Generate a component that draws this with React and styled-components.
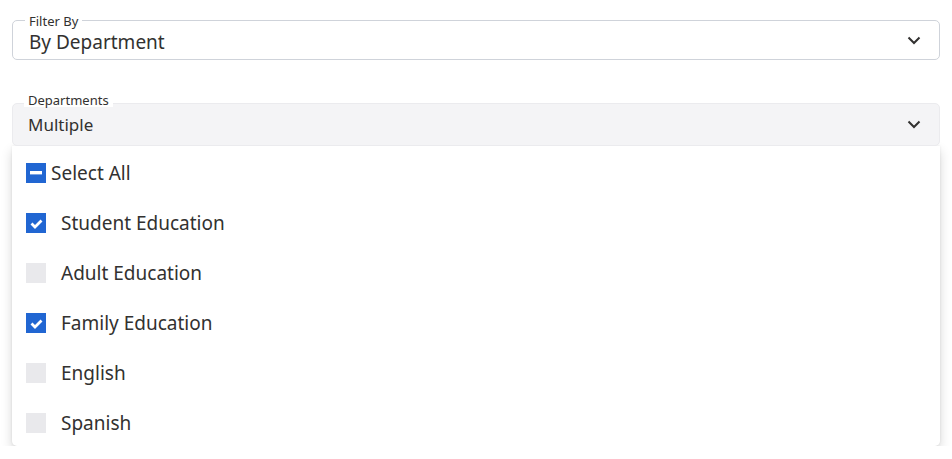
import React, { useState } from "react";
import styled, { createGlobalStyle } from "styled-components";

const GlobalStyle = createGlobalStyle`
  body {
    margin: 0;
    background: #fff;
    font-family: "Noto Sans", "Open Sans", sans-serif;
    color: #323130;
  }
`;

const Page = styled.div`
  display: flex;
  flex-direction: column;
  gap: 43px;
  padding: 20px 12px 0 12px;
  width: 928px;
`;

const Field = styled.div`
  position: relative;
  box-sizing: border-box;
  height: ${(p) => (p.filled ? "43px" : "40px")};
  padding: 0 18px 0 ${(p) => (p.filled ? "15px" : "16px")};
  border: 1px solid ${(p) => (p.filled ? "#ebebee" : "#cfd3da")};
  border-radius: 5px;
  background: ${(p) => (p.filled ? "#f4f4f6" : "#fff")};
  display: flex;
  align-items: center;
  justify-content: space-between;
`;

const Label = styled.span`
  position: absolute;
  top: ${(p) => (p.filled ? "-10px" : "-6px")};
  left: ${(p) => (p.filled ? "11px" : "12px")};
  padding: 0 4px;
  font-size: 13px;
  line-height: ${(p) => (p.filled ? "13px" : "12px")};
  background: #fff;
  color: #323130;
`;

const Value = styled.span`
  font-size: ${(p) => (p.small ? "17px" : "19px")};
  line-height: 22px;
  margin-top: ${(p) => (p.small ? "1px" : "3px")};
`;

const Chevron = styled.svg`
  width: 14px;
  height: 9px;
  flex: none;
`;

const Group = styled.div`
  display: flex;
  flex-direction: column;
`;

const Panel = styled.div`
  background: #fff;
  border-radius: 0 0 5px 5px;
  box-shadow: 0 5px 12px rgba(0, 0, 0, 0.16), 0 0 3px rgba(0, 0, 0, 0.08);
  padding: 2px 0 0 14px;
  display: flex;
  flex-direction: column;
`;

const Row = styled.label`
  display: flex;
  align-items: center;
  height: 50px;
  gap: ${(p) => (p.tight ? "5px" : "15px")};
  font-size: 19px;
  color: #323130;
  cursor: pointer;
  &:last-child {
    margin-bottom: -2px;
  }
`;

const Box = styled.span`
  width: 20px;
  height: 20px;
  flex: none;
  display: flex;
  align-items: center;
  justify-content: center;
  background: ${(p) => (p.on ? "#2166d2" : "#e9e9ec")};
`;

const ChevronIcon = () => (
  <Chevron viewBox="0 0 14 9">
    <path d="M1.5 1.5 L7 7 L12.5 1.5" fill="none" stroke="#323130" strokeWidth="2" />
  </Chevron>
);

const Check = () => (
  <svg width="13" height="11" viewBox="0 0 13 11">
    <path d="M1.5 5.5 L5 9 L11.5 2.5" fill="none" stroke="#fff" strokeWidth="2.8" />
  </svg>
);

const Dash = () => (
  <svg width="12" height="4" viewBox="0 0 12 4">
    <rect x="0" y="0" width="12" height="3.4" fill="#fff" />
  </svg>
);

const departments = [
  { name: "Student Education", on: true },
  { name: "Adult Education", on: false },
  { name: "Family Education", on: true },
  { name: "English", on: false },
  { name: "Spanish", on: false },
];

const App = () => {
  const [items, setItems] = useState(departments);

  const toggle = (i) =>
    setItems(items.map((d, j) => (j === i ? { ...d, on: !d.on } : d)));

  return (
    <Page>
      <GlobalStyle />
      <Field>
        <Label>Filter By</Label>
        <Value>By Department</Value>
        <ChevronIcon />
      </Field>
      <Group>
        <Field filled>
          <Label filled>Departments</Label>
          <Value small>Multiple</Value>
          <ChevronIcon />
        </Field>
        <Panel>
          <Row tight>
            <Box on>
              <Dash />
            </Box>
            Select All
          </Row>
          {items.map((d, i) => (
            <Row key={d.name} onClick={() => toggle(i)}>
              <Box on={d.on}>{d.on && <Check />}</Box>
              {d.name}
            </Row>
          ))}
        </Panel>
      </Group>
    </Page>
  );
};

export default App;
